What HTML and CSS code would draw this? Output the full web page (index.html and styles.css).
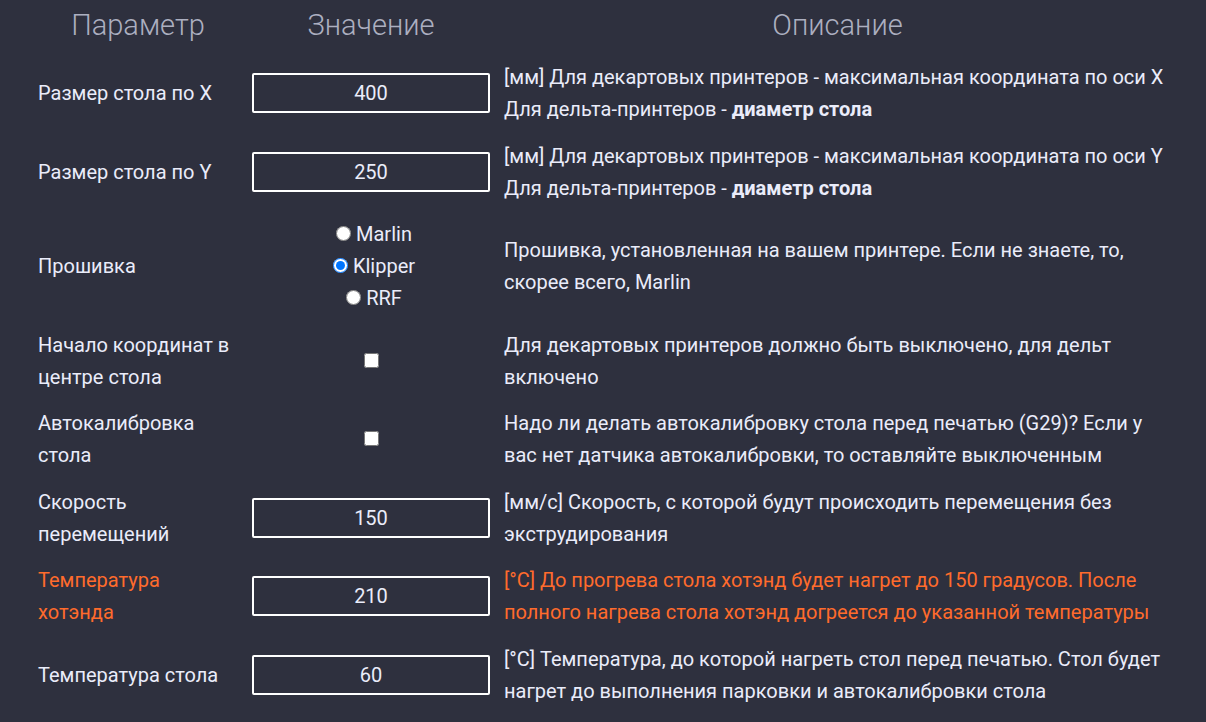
FILE: index.html
```html
<!DOCTYPE html>
<html lang="ru">
<head>
<meta charset="utf-8">
<title>Параметры принтера</title>
<link rel="stylesheet" href="styles.css">
</head>
<body>
<table class="params">
<colgroup><col class="col-name"><col class="col-value"><col></colgroup>
<thead><tr><th>Параметр</th><th>Значение</th><th>Описание</th></tr></thead>
<tbody>
<tr><td><label for="bed-x">Размер стола по X</label></td><td class="value"><input class="field" type="text" id="bed-x" value="400"></td><td>[мм] Для декартовых принтеров - максимальная координата по оси X<br>Для дельта-принтеров - <b>диаметр стола</b></td></tr>
<tr><td><label for="bed-y">Размер стола по Y</label></td><td class="value"><input class="field" type="text" id="bed-y" value="250"></td><td>[мм] Для декартовых принтеров - максимальная координата по оси Y<br>Для дельта-принтеров - <b>диаметр стола</b></td></tr>
<tr><td>Прошивка</td><td class="value"><input class="radio" type="radio" name="firmware" id="marlin"> <label for="marlin">Marlin</label><br><input class="radio" type="radio" name="firmware" id="klipper" checked> <label for="klipper">Klipper</label><br><input class="radio" type="radio" name="firmware" id="rrf"> <label for="rrf">RRF</label></td><td>Прошивка, установленная на вашем принтере. Если не знаете, то, скорее всего, Marlin</td></tr>
<tr><td><label for="center">Начало координат в центре стола</label></td><td class="value"><input class="check" type="checkbox" id="center"></td><td>Для декартовых принтеров должно быть выключено, для дельт включено</td></tr>
<tr><td><label for="level">Автокалибровка стола</label></td><td class="value"><input class="check" type="checkbox" id="level"></td><td>Надо ли делать автокалибровку стола перед печатью (G29)? Если у вас нет датчика автокалибровки, то оставляйте выключенным</td></tr>
<tr><td><label for="speed">Скорость перемещений</label></td><td class="value"><input class="field" type="text" id="speed" value="150"></td><td>[мм/с] Скорость, с которой будут происходить перемещения без экструдирования</td></tr>
<tr class="accent"><td><label for="hotend">Температура хотэнда</label></td><td class="value"><input class="field" type="text" id="hotend" value="210"></td><td>[°C] До прогрева стола хотэнд будет нагрет до 150 градусов. После полного нагрева стола хотэнд догреется до указанной температуры</td></tr>
<tr><td><label for="bed-temp">Температура стола</label></td><td class="value"><input class="field" type="text" id="bed-temp" value="60"></td><td>[°C] Температура, до которой нагреть стол перед печатью. Стол будет нагрет до выполнения парковки и автокалибровки стола</td></tr>
</tbody>
</table>
</body>
</html>
```

FILE: styles.css
```css
* {
  box-sizing: border-box;
}

body {
  margin: 0;
  padding: 0 28px 0 31px;
  background: #2e303e;
  color: #eaecfa;
  font: 20px/32px Roboto, "Noto Sans", sans-serif;
}

.params {
  width: 100%;
  table-layout: fixed;
  border-collapse: collapse;
}

.col-name {
  width: 214px;
}

.col-value {
  width: 252px;
}

th {
  height: 54px;
  padding: 0 0 4px;
  color: #acafc0;
  font-size: 29px;
  font-weight: 300;
}

td {
  padding: 7px;
  vertical-align: middle;
}

tr:nth-child(odd) td {
  padding-bottom: 8px;
}

.value {
  text-align: center;
}

.field {
  display: block;
  width: 100%;
  height: 40px;
  margin: 0;
  padding: 0 8px;
  border: 2px solid #fff;
  border-radius: 2px;
  background: transparent;
  color: inherit;
  font: inherit;
  text-align: center;
}

.radio,
.check {
  width: 15px;
  height: 15px;
  margin: 0 0 2px;
}

.radio {
  margin-left: 6px;
}

.accent {
  color: #ff6b2c;
}

.accent .field {
  color: #eaecfa;
}
```
